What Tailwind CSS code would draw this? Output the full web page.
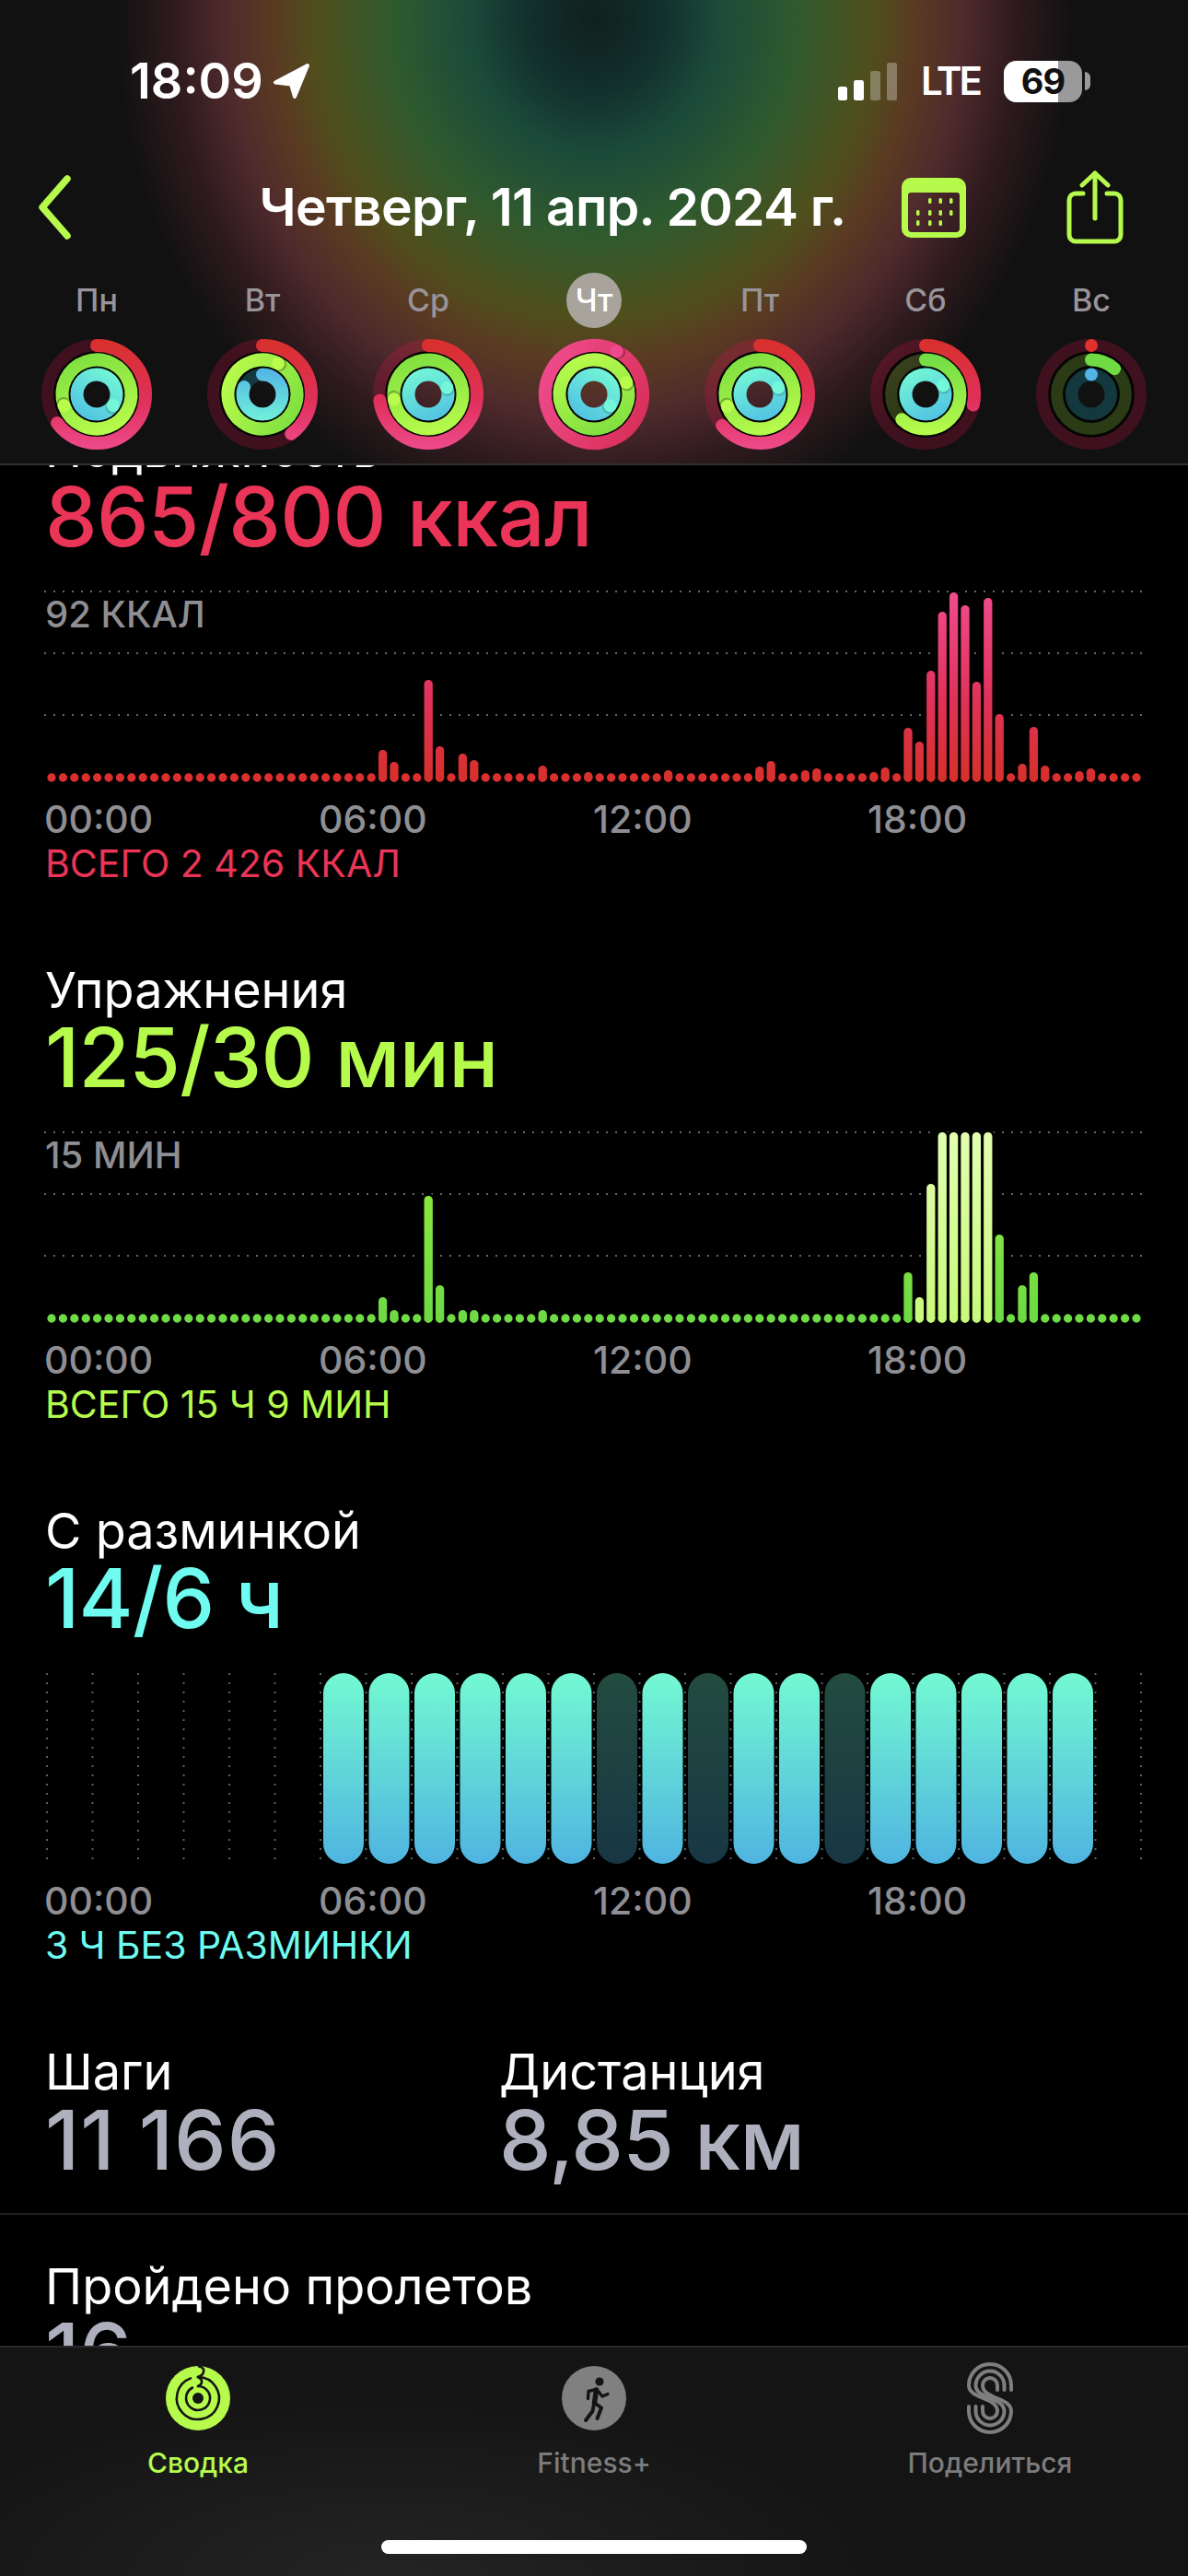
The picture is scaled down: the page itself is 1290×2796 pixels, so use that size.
<!doctype html>
<html lang="ru">
<head>
<meta charset="utf-8">
<title>Активность</title>
<script src="https://cdn.jsdelivr.net/npm/@tailwindcss/browser@4"></script>
</head>
<body class="bg-black">
<div class="relative w-[1290px] h-[2796px] overflow-hidden bg-black flex flex-col text-white font-['Inter',sans-serif]">

<svg class="absolute w-0 h-0" aria-hidden="true">
  <defs>
    <linearGradient id="ra" gradientUnits="userSpaceOnUse" x1="60" y1="0" x2="-60" y2="0"><stop offset="0" stop-color="#d8302c"/><stop offset=".55" stop-color="#e0305a"/><stop offset="1" stop-color="#ee4a8b"/></linearGradient>
    <linearGradient id="ga" gradientUnits="userSpaceOnUse" x1="44" y1="0" x2="-44" y2="0"><stop offset="0" stop-color="#6fdc44"/><stop offset="1" stop-color="#b8fb4c"/></linearGradient>
    <linearGradient id="ba" gradientUnits="userSpaceOnUse" x1="28" y1="0" x2="-28" y2="0"><stop offset="0" stop-color="#52b4e4"/><stop offset="1" stop-color="#70f0da"/></linearGradient>
    <linearGradient id="rf" gradientUnits="userSpaceOnUse" x1="0" y1="-60" x2="0" y2="60"><stop offset="0" stop-color="#ee4a8b"/><stop offset="1" stop-color="#d9305a"/></linearGradient>
    <linearGradient id="gf" gradientUnits="userSpaceOnUse" x1="0" y1="-44" x2="0" y2="44"><stop offset="0" stop-color="#b8fb4c"/><stop offset="1" stop-color="#80e040"/></linearGradient>
    <linearGradient id="bf" gradientUnits="userSpaceOnUse" x1="0" y1="-28" x2="0" y2="28"><stop offset="0" stop-color="#72f5d6"/><stop offset="1" stop-color="#52c4e2"/></linearGradient>
    <linearGradient id="redbar" gradientUnits="userSpaceOnUse" x1="0" y1="212" x2="0" y2="5"><stop offset="0" stop-color="#d6302a"/><stop offset=".45" stop-color="#e0325a"/><stop offset="1" stop-color="#f04c8e"/></linearGradient>
    <linearGradient id="grnbar" gradientUnits="userSpaceOnUse" x1="0" y1="212" x2="0" y2="70"><stop offset="0" stop-color="#6cd944"/><stop offset="1" stop-color="#8ae83e"/></linearGradient>
    <linearGradient id="litebar" gradientUnits="userSpaceOnUse" x1="0" y1="212" x2="0" y2="5"><stop offset="0" stop-color="#c8f97a"/><stop offset="1" stop-color="#e2ffb0"/></linearGradient>
    <linearGradient id="cyan" x1="0" y1="0" x2="0" y2="1"><stop offset="0" stop-color="#73f9d2"/><stop offset="1" stop-color="#4fb4e0"/></linearGradient>
    <g id="tr" fill="none" stroke-width="14">
      <circle r="53" stroke="#fa114f" stroke-opacity=".2"/>
      <circle r="37.5" stroke="#92e82a" stroke-opacity=".2"/>
      <circle r="21.5" stroke="#1ed8f0" stroke-opacity=".2"/>
    </g>
    <g id="gap" fill="none" stroke="#050505" stroke-width="2.8">
      <circle r="45.3"/>
      <circle r="29.5"/>
    </g>
    <path id="redbars" fill="none" stroke-linecap="round" d="M415.6 181.6V207M428 194.6V207M465.2 105.6V207M477.6 177.6V207M502.4 185.6V207M514.8 192.6V207M589.2 198.6V207M638.8 205.6V207M725.6 203.6V207M824.8 199.6V207M837.2 193.6V207M874.4 203.6V207M886.8 201.6V207M948.8 205.6V207M961.2 200.6V207M986 157.6V207M998.4 172.6V207M1010.8 95.6V207M1023.2 31.6V207M1035.6 10.6V207M1048 24.6V207M1060.4 107.6V207M1072.8 16.6V207M1085.2 142.6V207M1110 196.6V207M1122.4 156.6V207M1134.8 198.6V207M1172 204.6V207M1184.4 201.6V207"/>
    <path id="grnbars" fill="none" stroke-linecap="round" d="M415.6 188.6V207M428 202.6V207M465.2 78.6V207M477.6 175.6V207M502.4 202.6V207M514.8 202.6V207M589.2 202.6V207M986 161.6V207M1085.2 120.6V207M1110 175.6V207M1122.4 161.6V207"/>
    <path id="litebars" fill="none" stroke-linecap="round" d="M998.4 188.6V207M1010.8 65.6V207M1023.2 9.6V207M1035.6 9.6V207M1048 9.6V207M1060.4 9.6V207M1072.8 9.6V207"/>
    <g id="hgrid" stroke="#686868" stroke-width="2" stroke-dasharray="2 8">
      <line x1="48" x2="1240" y1="5" y2="5"/>
      <line x1="48" x2="1240" y1="72" y2="72"/>
      <line x1="48" x2="1240" y1="139" y2="139"/>
    </g>
  </defs>
</svg>

<!-- Header -->
<header class="relative h-[505px] shrink-0 overflow-hidden border-b-2 border-[#2e2e2e] bg-[#111] bg-[radial-gradient(ellipse_520px_560px_at_645px_20px,#10201e_0%,#12302c_14%,#1b4a3a_26%,#2f5a2e_42%,#4f4f1c_58%,#5a3a22_67%,#4f2a2c_77%,#2e1a1e_88%,#111_100%)]">
  <!-- status bar -->
  <div class="flex items-center justify-between h-[54px] mt-[61px] pl-[141px] pr-[106px]">
    <div class="flex items-center gap-[10px]">
      <span class="text-[54px] leading-[54px] font-semibold">18:09</span>
      <svg class="w-[41px] h-[40px]" viewBox="0 0 41 40"><path d="M38 3 3 21.500 20 23.500 24 37Z" fill="#fff" stroke="#fff" stroke-width="4" stroke-linejoin="round"/></svg>
    </div>
    <div class="flex items-center gap-[26px]">
      <svg class="w-[64px] h-[41px]" viewBox="0 0 64 41">
        <rect x="0" y="26" width="10" height="15" rx="2.500" fill="#fff"/>
        <rect x="17" y="19" width="11" height="22" rx="2.500" fill="#fff"/>
        <rect x="35" y="9" width="11" height="32" rx="2.500" fill="#fff" fill-opacity=".3"/>
        <rect x="53" y="0" width="11" height="41" rx="2.500" fill="#fff" fill-opacity=".3"/>
      </svg>
      <span class="text-[42px] leading-[42px] font-semibold tracking-[-3px]">LTE</span>
      <div class="flex items-center gap-[3px]">
        <div class="relative w-[85px] h-[45px] rounded-[14px] overflow-hidden bg-[#9a9a9a] flex items-center justify-center">
          <div class="absolute inset-y-0 left-0 w-[59px] bg-white"></div>
          <span class="relative text-[38px] leading-[38px] font-bold text-[#111] tracking-[-1px]">69</span>
        </div>
        <div class="w-[6px] h-[20px] rounded-r-full bg-[#9a9a9a]"></div>
      </div>
    </div>
  </div>
  <!-- nav -->
  <div class="flex items-center h-[90px] mt-[65px] pl-[40px]">
    <svg class="w-[40px] h-[70px] shrink-0" viewBox="0 0 40 70"><path d="M33 4 6 35l27 31" fill="none" stroke="#b6fb4c" stroke-width="7.500" stroke-linecap="round" stroke-linejoin="round"/></svg>
    <div class="w-[720px] ml-[160px] text-center text-[57px] leading-[60px] font-semibold tracking-[-0.75px] whitespace-nowrap">Четверг, 11 апр. 2024 г.</div>
    <svg class="w-[70px] h-[65px] ml-[19px] shrink-0" viewBox="0 0 70 65">
      <path fill="#b6fb4c" fill-rule="evenodd" d="M10 0H60A10 10 0 0 1 70 10V55A10 10 0 0 1 60 65H10A10 10 0 0 1 0 55V10A10 10 0 0 1 10 0ZM10 16A3 3 0 0 0 7 19V55A4 4 0 0 0 11 59H59A4 4 0 0 0 63 55V19A3 3 0 0 0 60 16Z"/>
      <g fill="#b6fb4c">
        <rect x="29" y="22" width="3.500" height="6" rx="1.500"/><rect x="40.500" y="22" width="3.500" height="6" rx="1.500"/><rect x="52" y="22" width="3.500" height="6" rx="1.500"/>
        <rect x="16" y="35" width="3.500" height="6" rx="1.500"/><rect x="29" y="35" width="3.500" height="6" rx="1.500"/><rect x="40.500" y="35" width="3.500" height="6" rx="1.500"/><rect x="52" y="35" width="3.500" height="6" rx="1.500"/>
        <rect x="16" y="46" width="3.500" height="6" rx="1.500"/><rect x="29" y="46" width="3.500" height="6" rx="1.500"/><rect x="40.500" y="46" width="3.500" height="6" rx="1.500"/>
      </g>
    </svg>
    <svg class="w-[62px] h-[80px] ml-[109px] shrink-0" viewBox="0 0 62 80">
      <g fill="none" stroke="#b6fb4c" stroke-width="5" stroke-linecap="round" stroke-linejoin="round">
        <path d="M18 25H10A7 7 0 0 0 3 32V70A7 7 0 0 0 10 77H52A7 7 0 0 0 59 70V32A7 7 0 0 0 52 25H44"/>
        <path d="M31 3V52"/>
        <path d="M17 16 31 3 45 16"/>
      </g>
    </svg>
  </div>
  <!-- days -->
  <div class="grid grid-cols-7 px-[15px] mt-[26px] text-[34px] leading-[36px] font-medium text-[#98949a] text-center">
    <div class="h-[60px] flex items-center justify-center">Пн</div>
    <div class="h-[60px] flex items-center justify-center">Вт</div>
    <div class="h-[60px] flex items-center justify-center">Ср</div>
    <div class="h-[60px] flex items-center justify-center"><span class="w-[60px] h-[60px] rounded-full bg-[#a8a49c] text-white flex items-center justify-center">Чт</span></div>
    <div class="h-[60px] flex items-center justify-center">Пт</div>
    <div class="h-[60px] flex items-center justify-center">Сб</div>
    <div class="h-[60px] flex items-center justify-center">Вс</div>
  </div>
  <!-- rings -->
  <div class="grid grid-cols-7 px-[15px] mt-[7px] justify-items-center">
    <svg class="w-[130px] h-[130px]" viewBox="-65 -65 130 130"><use href="#tr"/><use href="#gap"/>
      <g transform="rotate(-90)" fill="none" stroke-width="14" stroke-linecap="round"><circle r="53" pathLength="100" stroke-dasharray="65 100" stroke="url(#ra)"/></g>
      <g transform="rotate(161)"><circle r="37.5" fill="none" stroke-width="14" stroke="url(#gf)"/><circle cx="37.5" cy="2" r="7.5" fill="#000" fill-opacity=".25"/><circle cx="37.5" r="7" fill="#bafc4c"/></g>
      <g transform="rotate(34)"><circle r="21.5" fill="none" stroke-width="14" stroke="url(#bf)"/><circle cx="21.5" cy="2" r="7.5" fill="#000" fill-opacity=".15"/><circle cx="21.5" r="7" fill="#74f6d8"/></g>
    </svg>
    <svg class="w-[130px] h-[130px]" viewBox="-65 -65 130 130"><use href="#tr"/><use href="#gap"/>
      <g transform="rotate(-90)" fill="none" stroke-width="14" stroke-linecap="round"><circle r="53" pathLength="100" stroke-dasharray="40 100" stroke="url(#ra)"/><circle r="21.5" pathLength="100" stroke-dasharray="81 100" stroke="url(#ba)"/></g>
      <g transform="rotate(-63)"><circle r="37.5" fill="none" stroke-width="14" stroke="url(#gf)"/><circle cx="37.5" cy="2" r="7.5" fill="#000" fill-opacity=".25"/><circle cx="37.5" r="7" fill="#bafc4c"/></g>
    </svg>
    <svg class="w-[130px] h-[130px]" viewBox="-65 -65 130 130"><use href="#tr"/><use href="#gap"/>
      <g transform="rotate(-90)" fill="none" stroke-width="14" stroke-linecap="round"><circle r="53" pathLength="100" stroke-dasharray="73 100" stroke="url(#ra)"/></g>
      <g transform="rotate(172)"><circle r="37.5" fill="none" stroke-width="14" stroke="url(#gf)"/><circle cx="37.5" cy="2" r="7.5" fill="#000" fill-opacity=".25"/><circle cx="37.5" r="7" fill="#bafc4c"/></g>
      <g transform="rotate(-20)"><circle r="21.5" fill="none" stroke-width="14" stroke="url(#bf)"/><circle cx="21.5" cy="2" r="7.5" fill="#000" fill-opacity=".15"/><circle cx="21.5" r="7" fill="#74f6d8"/></g>
    </svg>
    <svg class="w-[130px] h-[130px]" viewBox="-65 -65 130 130"><use href="#gap"/>
      <g transform="rotate(-62)"><circle r="53" fill="none" stroke-width="14" stroke="url(#rf)"/><circle cx="53" cy="2" r="7.5" fill="#000" fill-opacity=".25"/><circle cx="53" r="7" fill="#ee4a8b"/></g>
      <g transform="rotate(-20)"><circle r="37.5" fill="none" stroke-width="14" stroke="url(#gf)"/><circle cx="37.5" cy="2" r="7.5" fill="#000" fill-opacity=".25"/><circle cx="37.5" r="7" fill="#bafc4c"/></g>
      <g transform="rotate(35)"><circle r="21.5" fill="none" stroke-width="14" stroke="url(#bf)"/><circle cx="21.5" cy="2" r="7.5" fill="#000" fill-opacity=".15"/><circle cx="21.5" r="7" fill="#74f6d8"/></g>
    </svg>
    <svg class="w-[130px] h-[130px]" viewBox="-65 -65 130 130"><use href="#tr"/><use href="#gap"/>
      <g transform="rotate(-90)" fill="none" stroke-width="14" stroke-linecap="round"><circle r="53" pathLength="100" stroke-dasharray="64 100" stroke="url(#ra)"/></g>
      <g transform="rotate(160)"><circle r="37.5" fill="none" stroke-width="14" stroke="url(#gf)"/><circle cx="37.5" cy="2" r="7.5" fill="#000" fill-opacity=".25"/><circle cx="37.5" r="7" fill="#bafc4c"/></g>
      <g transform="rotate(-20)"><circle r="21.5" fill="none" stroke-width="14" stroke="url(#bf)"/><circle cx="21.5" cy="2" r="7.5" fill="#000" fill-opacity=".15"/><circle cx="21.5" r="7" fill="#74f6d8"/></g>
    </svg>
    <svg class="w-[130px] h-[130px]" viewBox="-65 -65 130 130"><use href="#tr"/><use href="#gap"/>
      <g transform="rotate(-90)" fill="none" stroke-width="14" stroke-linecap="round"><circle r="53" pathLength="100" stroke-dasharray="28.5 100" stroke="url(#ra)"/><circle r="37.5" pathLength="100" stroke-dasharray="62 100" stroke="url(#ga)"/></g>
      <g transform="rotate(-27)"><circle r="21.5" fill="none" stroke-width="14" stroke="url(#bf)"/><circle cx="21.5" cy="2" r="7.5" fill="#000" fill-opacity=".15"/><circle cx="21.5" r="7" fill="#74f6d8"/></g>
    </svg>
    <svg class="w-[130px] h-[130px]" viewBox="-65 -65 130 130"><use href="#tr"/><use href="#gap"/>
      <g transform="rotate(-90)" fill="none" stroke-width="14" stroke-linecap="round"><circle r="53" pathLength="100" stroke-dasharray="0 100" stroke="#e2302c"/><circle r="37.5" pathLength="100" stroke-dasharray="11.7 100" stroke="#6fdc44"/><circle r="21.5" pathLength="100" stroke-dasharray="0 100" stroke="#52b4e4"/></g>
    </svg>
  </div>
</header>

<!-- Scrolling content -->
<main class="flex-1 min-h-0 overflow-hidden">
  <div class="-mt-[47px]">

    <section class="h-[587px] flex flex-col">
      <h2 class="pl-[49px] text-[54px] leading-[60px] font-normal">Подвижность</h2>
      <div class="pl-[49px] text-[90px] leading-[86px] font-medium tracking-[-0.75px] text-[#ea3558] whitespace-nowrap">865/800 ккал</div>
      <div class="relative mt-[33px] h-[230px]">
        <svg class="block w-[1290px] h-[230px]" viewBox="0 0 1290 230">
          <use href="#hgrid"/>
          <use href="#redbars" stroke="#000" stroke-width="15"/>
          <line x1="56" x2="1235" y1="207" y2="207" stroke="#dc302e" stroke-width="9.3" stroke-linecap="round" stroke-dasharray="0 12.4"/>
          <use href="#redbars" stroke="url(#redbar)" stroke-width="9.3"/>
        </svg>
        <div class="absolute left-[49px] top-[8px] text-[40px] leading-[44px] font-medium text-[#8e8e93]">92 ККАЛ</div>
      </div>
      <div class="flex pl-[48px] text-[41px] leading-[44px] font-medium text-[#8e8e93]">
        <span class="w-[298px]">00:00</span><span class="w-[298px]">06:00</span><span class="w-[298px]">12:00</span><span>18:00</span>
      </div>
      <div class="pl-[49px] mt-[4px] text-[41px] leading-[44px] text-[#ea3558]">ВСЕГО 2 426 ККАЛ</div>
    </section>

    <section class="h-[587px] flex flex-col">
      <h2 class="pl-[49px] text-[54px] leading-[60px] font-normal">Упражнения</h2>
      <div class="pl-[49px] text-[90px] leading-[86px] font-medium tracking-[-0.75px] text-[#b6fb4c] whitespace-nowrap">125/30 мин</div>
      <div class="relative mt-[33px] h-[230px]">
        <svg class="block w-[1290px] h-[230px]" viewBox="0 0 1290 230">
          <use href="#hgrid"/>
          <use href="#grnbars" stroke="#000" stroke-width="15"/>
          <use href="#litebars" stroke="#000" stroke-width="15"/>
          <line x1="56" x2="1235" y1="207" y2="207" stroke="#6fdc45" stroke-width="9.3" stroke-linecap="round" stroke-dasharray="0 12.4"/>
          <use href="#grnbars" stroke="url(#grnbar)" stroke-width="9.3"/>
          <use href="#litebars" stroke="url(#litebar)" stroke-width="9.3"/>
        </svg>
        <div class="absolute left-[49px] top-[8px] text-[40px] leading-[44px] font-medium text-[#8e8e93]">15 МИН</div>
      </div>
      <div class="flex pl-[48px] text-[41px] leading-[44px] font-medium text-[#8e8e93]">
        <span class="w-[298px]">00:00</span><span class="w-[298px]">06:00</span><span class="w-[298px]">12:00</span><span>18:00</span>
      </div>
      <div class="pl-[49px] mt-[4px] text-[41px] leading-[44px] text-[#b6fb4c]">ВСЕГО 15 Ч 9 МИН</div>
    </section>

    <section class="h-[587px] flex flex-col">
      <h2 class="pl-[49px] text-[54px] leading-[60px] font-normal">С разминкой</h2>
      <div class="pl-[49px] text-[90px] leading-[86px] font-medium tracking-[-0.75px] text-[#6ffbf0] whitespace-nowrap">14/6 ч</div>
      <div class="mt-[33px] h-[230px]">
        <svg class="block w-[1290px] h-[230px]" viewBox="0 0 1290 230">
          <g stroke="#606060" stroke-width="2" stroke-dasharray="2 8">
            <line x1="51" x2="51" y1="5" y2="215"/><line x1="100.5" x2="100.5" y1="5" y2="215"/><line x1="150" x2="150" y1="5" y2="215"/><line x1="199.5" x2="199.5" y1="5" y2="215"/><line x1="249" x2="249" y1="5" y2="215"/><line x1="298.5" x2="298.5" y1="5" y2="215"/><line x1="348" x2="348" y1="5" y2="215"/><line x1="397.5" x2="397.5" y1="5" y2="215"/><line x1="447" x2="447" y1="5" y2="215"/><line x1="496.5" x2="496.5" y1="5" y2="215"/><line x1="546" x2="546" y1="5" y2="215"/><line x1="595.5" x2="595.5" y1="5" y2="215"/><line x1="645" x2="645" y1="5" y2="215"/><line x1="694.5" x2="694.5" y1="5" y2="215"/><line x1="744" x2="744" y1="5" y2="215"/><line x1="793.5" x2="793.5" y1="5" y2="215"/><line x1="843" x2="843" y1="5" y2="215"/><line x1="892.5" x2="892.5" y1="5" y2="215"/><line x1="942" x2="942" y1="5" y2="215"/><line x1="991.5" x2="991.5" y1="5" y2="215"/><line x1="1041" x2="1041" y1="5" y2="215"/><line x1="1090.5" x2="1090.5" y1="5" y2="215"/><line x1="1140" x2="1140" y1="5" y2="215"/><line x1="1189.5" x2="1189.5" y1="5" y2="215"/><line x1="1239" x2="1239" y1="5" y2="215"/>
          </g>
          <g fill="url(#cyan)">
            <rect x="351" y="5" width="44" height="207" rx="22"/><rect x="400.5" y="5" width="44" height="207" rx="22"/><rect x="450" y="5" width="44" height="207" rx="22"/><rect x="499.5" y="5" width="44" height="207" rx="22"/><rect x="549" y="5" width="44" height="207" rx="22"/><rect x="598.5" y="5" width="44" height="207" rx="22"/>
            <rect x="648" y="5" width="44" height="207" rx="22" fill-opacity=".3"/>
            <rect x="697.5" y="5" width="44" height="207" rx="22"/>
            <rect x="747" y="5" width="44" height="207" rx="22" fill-opacity=".3"/>
            <rect x="796.5" y="5" width="44" height="207" rx="22"/><rect x="846" y="5" width="44" height="207" rx="22"/>
            <rect x="895.5" y="5" width="44" height="207" rx="22" fill-opacity=".3"/>
            <rect x="945" y="5" width="44" height="207" rx="22"/><rect x="994.5" y="5" width="44" height="207" rx="22"/><rect x="1044" y="5" width="44" height="207" rx="22"/><rect x="1093.5" y="5" width="44" height="207" rx="22"/><rect x="1143" y="5" width="44" height="207" rx="22"/>
          </g>
        </svg>
      </div>
      <div class="flex pl-[48px] text-[41px] leading-[44px] font-medium text-[#8e8e93]">
        <span class="w-[298px]">00:00</span><span class="w-[298px]">06:00</span><span class="w-[298px]">12:00</span><span>18:00</span>
      </div>
      <div class="pl-[49px] mt-[4px] text-[41px] leading-[44px] text-[#6ffbf0]">3 Ч БЕЗ РАЗМИНКИ</div>
    </section>

    <section>
      <div class="flex pl-[49px] pb-[35px] border-b-2 border-[#1f1f1f]">
        <div class="w-[493px]">
          <div class="text-[54px] leading-[60px]">Шаги</div>
          <div class="text-[90px] leading-[88px] font-medium text-[#aeb0bd] tracking-[1px]">11 166</div>
        </div>
        <div>
          <div class="text-[54px] leading-[60px]">Дистанция</div>
          <div class="text-[90px] leading-[88px] font-medium tracking-[-0.75px] text-[#aeb0bd] whitespace-nowrap">8,85 км</div>
        </div>
      </div>
      <div class="pl-[49px] pt-[49px]">
        <div class="text-[54px] leading-[57px]">Пройдено пролетов</div>
        <div class="text-[90px] leading-[88px] font-medium text-[#aeb0bd]">16</div>
      </div>
    </section>
  </div>
</main>

<!-- Tab bar -->
<footer class="relative h-[250px] shrink-0 border-t-2 border-[#2a2a2a] bg-[#141414] bg-[radial-gradient(ellipse_560px_200px_at_420px_100%,#242424,#141414)]">
  <nav class="grid grid-cols-3 pt-[16px] text-center text-[30px] leading-[36px] font-medium">
    <div class="flex flex-col items-center text-[#b6fb4c]">
      <svg class="w-[70px] h-[78px]" viewBox="0 -4 70 78">
        <circle cx="35" cy="35" r="35" fill="#b6fb4c"/>
        <g fill="none" stroke="#141414" stroke-width="2.600" stroke-linecap="round">
          <path d="M35 12A23 23 0 1 1 27 13.400"/>
          <path d="M35 22A13 13 0 1 1 29 23.500"/>
          <path d="M35 12C42 10 44 2 36 .5"/>
          <path d="M35 22C40 20 41 15 35 12"/>
        </g>
        <circle cx="35" cy="35" r="6" fill="#141414"/>
      </svg>
      <span class="mt-[13px]">Сводка</span>
    </div>
    <div class="flex flex-col items-center text-[#7c7c7c]">
      <svg class="w-[70px] h-[78px]" viewBox="0 -4 70 78">
        <circle cx="35" cy="35" r="35" fill="#808080"/>
        <circle cx="41" cy="17" r="4.600" fill="#141414"/>
        <g fill="none" stroke="#141414" stroke-linecap="round" stroke-linejoin="round">
          <path stroke-width="5.500" d="M37.500 26 35.500 40"/>
          <path stroke-width="3.400" d="M38 25.500 44 33 50 30.500"/>
          <path stroke-width="3.400" d="M37 25.500 29 27.500 28.500 35.500"/>
          <path stroke-width="4" d="M35.500 40 43 45.500 38.500 57"/>
          <path stroke-width="4" d="M35 41 33.500 49 26 59"/>
        </g>
      </svg>
      <span class="mt-[13px]">Fitness+</span>
    </div>
    <div class="flex flex-col items-center text-[#7c7c7c]">
      <svg class="w-[50px] h-[78px]" viewBox="0 0 50 78">
        <g fill="none" stroke="#7e7e7e" stroke-width="4" stroke-linecap="round">
          <path d="M48 30V25A23 23 0 0 0 2 25C2 40 33 38 33 53A8 8 0 0 1 17 53V48"/>
          <path d="M40.500 30V25A15.500 15.500 0 0 0 9.500 25C9.500 40 40.500 38 40.500 53A15.500 15.500 0 0 1 9.500 53V48"/>
          <path d="M33 30V25A8 8 0 0 0 17 25C17 40 48 38 48 53A23 23 0 0 1 2 53V48"/>
        </g>
      </svg>
      <span class="mt-[13px]">Поделиться</span>
    </div>
  </nav>
  <div class="absolute left-[414px] bottom-[24px] w-[462px] h-[15px] rounded-full bg-white"></div>
</footer>
</div>
</body>
</html>
